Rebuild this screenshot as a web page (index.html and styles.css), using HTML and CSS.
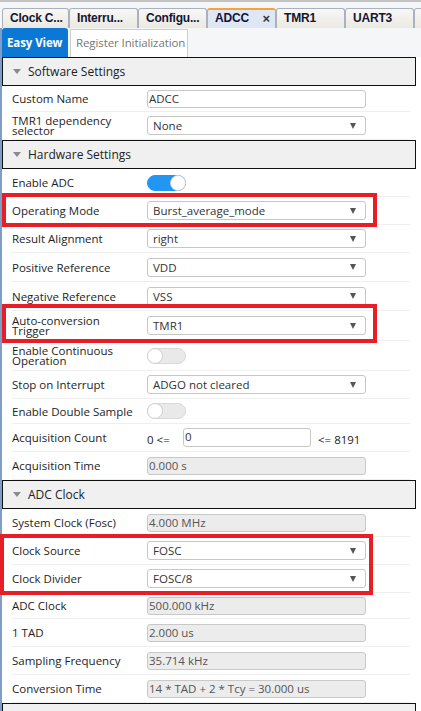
FILE: index.html
```html
<!DOCTYPE html>
<html lang="en">
<head>
  <meta charset="UTF-8" />
  <meta name="viewport" content="width=device-width, initial-scale=1" />
  <title>ADCC - Easy View</title>
  <link rel="stylesheet" href="styles.css">
</head>
<body>
  <div class="topline"></div>

  <div class="tabs">
    <div class="tab">Clock C...</div>
    <div class="tab">Interru...</div>
    <div class="tab">Configu...</div>
    <div class="tab active">ADCC<span class="close">×</span></div>
    <div class="tab">TMR1</div>
    <div class="tab">UART3</div>
    <div class="tab stub"></div>
  </div>

  <div class="view">
    <div class="subtabs">
      <div class="subtab on">Easy View</div>
      <div class="subtab">Register Initialization</div>
    </div>

    <div class="panel">
      <div class="sect-head"><span class="caret"></span>Software Settings</div>
      <div class="row r26"><span class="lbl">Custom Name</span><div class="field">ADCC</div></div>
      <div class="row"><span class="lbl two">TMR1 dependency selector</span><div class="sel">None</div></div>

      <div class="sect-head"><span class="caret"></span>Hardware Settings</div>
      <div class="row"><span class="lbl">Enable ADC</span><div class="tgl on"><span class="knob"></span></div></div>
      <div class="hl hl-op">
        <div class="row"><span class="lbl">Operating Mode</span><div class="sel">Burst_average_mode</div></div>
      </div>
      <div class="row"><span class="lbl">Result Alignment</span><div class="sel">right</div></div>
      <div class="row r29"><span class="lbl">Positive Reference</span><div class="sel">VDD</div></div>
      <div class="row r29"><span class="lbl">Negative Reference</span><div class="sel">VSS</div></div>
      <div class="hl hl-trig">
        <div class="row r30"><span class="lbl two">Auto-conversion Trigger</span><div class="sel">TMR1</div></div>
      </div>
      <div class="row r30"><span class="lbl two">Enable Continuous Operation</span><div class="tgl"><span class="knob"></span></div></div>
      <div class="row"><span class="lbl">Stop on Interrupt</span><div class="sel">ADGO not cleared</div></div>
      <div class="row r25"><span class="lbl">Enable Double Sample</span><div class="tgl"><span class="knob"></span></div></div>
      <div class="row">
        <span class="lbl">Acquisition Count</span>
        <div class="count"><span class="lim">0 &lt;=</span><div class="field small">0</div><span class="lim-r">&lt;= 8191</span></div>
      </div>
      <div class="row"><span class="lbl">Acquisition Time</span><div class="field ro">0.000 s</div></div>

      <div class="sect-head"><span class="caret"></span>ADC Clock</div>
      <div class="row"><span class="lbl">System Clock (Fosc)</span><div class="field ro">4.000 MHz</div></div>
      <div class="hl hl-clk">
        <div class="row"><span class="lbl">Clock Source</span><div class="sel">FOSC</div></div>
        <div class="row"><span class="lbl">Clock Divider</span><div class="sel">FOSC/8</div></div>
      </div>
      <div class="row r26"><span class="lbl">ADC Clock</span><div class="field ro">500.000 kHz</div></div>
      <div class="row"><span class="lbl">1 TAD</span><div class="field ro">2.000 us</div></div>
      <div class="row"><span class="lbl">Sampling Frequency</span><div class="field ro">35.714 kHz</div></div>
      <div class="row"><span class="lbl">Conversion Time</span><div class="field ro">14 * TAD + 2 * Tcy = 30.000 us</div></div>

      <div class="sect-head"></div>
    </div>
  </div>
</body>
</html>
```

FILE: styles.css
```css
body {
  margin: 0;
  background-color: #f5f6f7;
  font-family: "Open Sans", sans-serif;
  font-size: 11.5px;
  color: #1e1e1e;
}

.topline {
  height: 2px;
  background-color: #c3c3c3;
}

/* document tabs */
.tabs {
  display: flex;
  padding: 6px 0 0 2px;
  height: 20px;
}
.tab {
  box-sizing: border-box;
  width: 69px;
  height: 20px;
  flex-shrink: 0;
  padding-left: 7px;
  border: 1px solid #a9b1bf;
  border-bottom: none;
  border-radius: 3px 3px 0 0;
  background: linear-gradient(#f8f7f4, #ebe9e3);
  font-family: "Liberation Sans", Arial, sans-serif;
  font-weight: bold;
  font-size: 12px;
  line-height: 18px;
  color: #121533;
  letter-spacing: -0.2px;
}
.tab:first-child {
  width: 67px;
}
.tab.active {
  display: flex;
  justify-content: space-between;
  padding-right: 5px;
  border-top: 2px solid #f2a33a;
  background: #dfe7f5;
  line-height: 17px;
}
.tab .close {
  font-size: 13px;
  color: #333;
}
.tab.stub {
  width: 10px;
}

.view {
  border-left: 2px solid #7f9dc6;
}

.subtabs {
  display: flex;
  gap: 2px;
  height: 29px;
}
.subtab {
  box-sizing: border-box;
  margin-top: 1px;
  width: 118px;
  padding-left: 5px;
  border: 1px solid #cdcdcd;
  border-bottom: none;
  background: white;
  color: #777;
  line-height: 26px;
  font-size: 11.5px;
  letter-spacing: -0.1px;
  white-space: nowrap;
  overflow: hidden;
}
.subtab.on {
  width: 66px;
  margin-top: 0;
  border: none;
  border-radius: 3px 3px 0 0;
  background: #0a78d4;
  color: white;
  font-weight: bold;
  line-height: 29px;
}

/* settings panel */
.panel {
  background: white;
  padding-bottom: 20px;
}

.sect-head {
  box-sizing: border-box;
  display: flex;
  align-items: center;
  height: 29px;
  margin-right: 5px;
  padding-left: 10px;
  border: 1px solid #111;
  background: #f0f0f0;
  font-size: 12px;
  color: #222;
}
.caret {
  width: 0;
  height: 0;
  border-left: 4px solid transparent;
  border-right: 4px solid transparent;
  border-top: 5px solid #8a8a8a;
  margin-right: 7px;
}

.row {
  box-sizing: border-box;
  display: flex;
  align-items: center;
  height: 28px;
  width: 398px;
  margin-left: 10px;
  border-bottom: 1px solid #efefef;
}
.row.r25 { height: 25px; }
.row.r26 { height: 26px; }
.row.r29 { height: 29px; }
.row.r30 { height: 30px; }

.lbl {
  width: 135px;
  flex-shrink: 0;
}
.lbl.two {
  width: 110px;
  line-height: 10px;
}
.row .lbl.two + * {
  margin-left: 25px;
}

.sel {
  box-sizing: border-box;
  display: flex;
  align-items: center;
  justify-content: space-between;
  width: 219px;
  height: 19px;
  padding: 0 9px 0 5px;
  border: 1px solid #c6c6c6;
  border-radius: 3px;
  background: white;
  color: #333;
}
.sel::after {
  content: "";
  width: 0;
  height: 0;
  border-left: 3px solid transparent;
  border-right: 3px solid transparent;
  border-top: 6px solid #555;
}

.field {
  box-sizing: border-box;
  width: 219px;
  height: 18px;
  padding-left: 1px;
  border: 1px solid #c8c8c8;
  border-radius: 3px;
  background: white;
  color: #333;
  line-height: 16px;
}
.field.ro {
  background: #ececec;
  color: #555;
}
.field.small {
  width: 128px;
  height: 19px;
}

.count {
  display: flex;
  align-items: center;
  color: #222;
}
.lim {
  width: 36px;
  padding-top: 3px;
}
.lim-r {
  margin-left: 7px;
  padding-top: 3px;
}

.tgl {
  box-sizing: border-box;
  display: flex;
  justify-content: flex-start;
  width: 39px;
  height: 16px;
  border: 1px solid #d9d9d9;
  border-radius: 8px;
  background: #e9e9e9;
}
.tgl.on {
  justify-content: flex-end;
  border-color: #2196f3;
  background: #2196f3;
}
.knob {
  box-sizing: border-box;
  width: 16px;
  height: 16px;
  margin: -1px;
  border: 1px solid #d0d0d0;
  border-radius: 50%;
  background: white;
}

/* red annotation boxes */
.hl {
  position: relative;
}
.hl::after {
  content: "";
  position: absolute;
  box-sizing: border-box;
  border: 4px solid #e81e27;
  pointer-events: none;
}
.hl-op::after {
  left: 0;
  width: 375px;
  top: -4px;
  bottom: -2px;
}
.hl-trig::after {
  left: 0;
  width: 375px;
  top: -7px;
  bottom: -2px;
}
.hl-clk::after {
  left: -2px;
  width: 373px;
  top: -3px;
  bottom: -2px;
}
```
